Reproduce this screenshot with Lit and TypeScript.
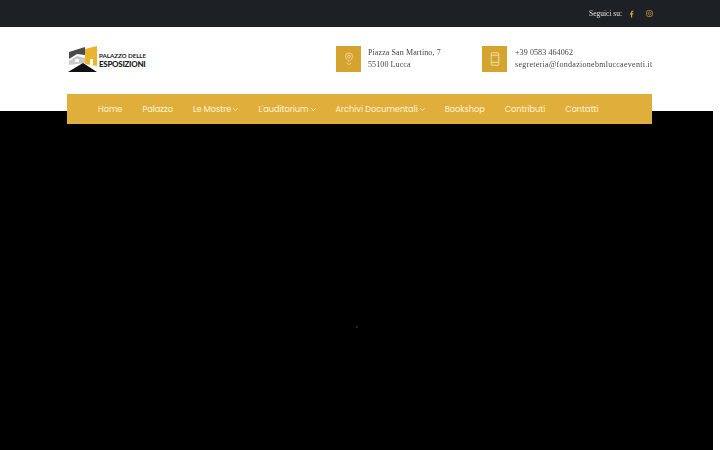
import { LitElement, html, css } from "lit";
import { customElement } from "lit/decorators.js";

const chevron = html`<svg class="chev" viewBox="0.500 1 7 6" width="5" height="5"><path d="M1 2.500 L4 5.500 L7 2.500" fill="none" stroke="currentColor" stroke-width="1.300"/></svg>`;

@customElement("app-root")
export class AppRoot extends LitElement {
  static styles = css`
    :host { display: block; width: 720px; height: 450px; overflow: hidden; background: #fff; }
    .top { height: 27px; background: #1d2125; display: flex; align-items: center; justify-content: flex-end; padding-right: 65px; box-sizing: border-box; }
    .top .label { font: 7.500px "Liberation Serif", serif; color: #e2e2e2; margin-right: 3px; will-change: transform; }
    .social { width: 12px; height: 12px; display: flex; align-items: center; justify-content: center; }
    .social + .social { margin-left: 6px; }
    .head { height: 67px; padding: 0 68px 3px; display: flex; align-items: center; box-sizing: border-box; }
    .logo { display: flex; align-items: center; gap: 2px; width: 268px; flex: none; }
    .brand { font-family: "Lato", sans-serif; color: #1c1c1c; line-height: 1; margin-top: 3px; white-space: nowrap; }
    .brand .a { font-size: 6.300px; font-weight: 700; letter-spacing: -0.1px; display: block; }
    .brand .b { font-size: 8px; font-weight: 900; letter-spacing: -0.3px; display: block; margin-top: 1px; }
    .info { display: flex; align-items: center; gap: 7px; flex: none; }
    .info.one { width: 146px; }
    .info.two { gap: 8px; }
    .box { width: 25px; height: 26px; background: #d5a42f; display: flex; align-items: center; justify-content: center; flex: none; }
    .lines { font: 8px/12px "Liberation Serif", serif; color: #444; letter-spacing: 0.1px; white-space: nowrap; will-change: transform; }
    .lines div { height: 12px; }
    .lines .wide { letter-spacing: 0.28px; }
    nav { position: relative; z-index: 1; margin-left: 67px; width: 585px; height: 30px; background: #e0ae3a; display: flex; align-items: center; padding-left: 31px; box-sizing: border-box; gap: 20px; font: 8.200px "Poppins", "Inter", sans-serif; color: #fff4dc; white-space: nowrap; }
    nav span { display: inline-flex; align-items: center; gap: 2px; }
    .chev { margin-top: 1px; }
    .hero { margin-top: -13px; height: 432px; width: 713px; background: #000; display: flex; align-items: center; justify-content: center; }
    .dot { width: 2px; height: 2px; border-radius: 50%; background: #333; }
  `;

  render() {
    return html`
      <div class="top">
        <span class="label">Seguici su:</span>
        <span class="social">
          <svg viewBox="0 0 8 12" width="5" height="8"><path d="M5 11.500V6.600h1.700L7 4.700H5V3.500c0-.6.200-1 1-1h1.100V.8C6.800.7 6.300.7 5.700.7 4.200.7 3.200 1.600 3.200 3.200v1.500H1.500v1.900h1.700v4.900z" fill="#d9a933"/></svg>
        </span>
        <span class="social">
          <svg viewBox="0 0 12 12" width="7" height="7" fill="none" stroke="#c9a035" stroke-width="1.300"><rect x="1" y="1" width="10" height="10" rx="3"/><circle cx="6" cy="6" r="2.300"/></svg>
        </span>
      </div>
      <div class="head">
        <div class="logo">
          <svg viewBox="0 0 29 26" width="29" height="26">
            <polygon points="17,3 29,0 29,20 17,18" fill="#e9b52c"/>
            <polygon points="1,6 17,1 17,9 9,8 1,13" fill="#4a4a4a"/>
            <polygon points="1,15 9,10 17,12 17,17 1,19" fill="#c9c9c9"/>
            <rect x="7" y="13" width="4" height="3" fill="#fff"/>
            <rect x="22" y="13" width="3" height="6" fill="#fff"/>
            <polygon points="0,26 15,17 29,26" fill="#111"/>
          </svg>
          <div class="brand"><span class="a">PALAZZO DELLE</span><span class="b">ESPOSIZIONI</span></div>
        </div>
        <div class="info one">
          <div class="box">
            <svg viewBox="0 0 14 18" width="10" height="14" fill="none" stroke="#f7e7bd" stroke-width="1"><path d="M7 12.500C4.500 10 2 8 2 5.500a5 5 0 0 1 10 0c0 2.500-2.500 4.500-5 7z"/><circle cx="7" cy="5.500" r="2"/><path d="M4 14.500 7 17l3-2.500"/></svg>
          </div>
          <div class="lines"><div>Piazza San Martino, 7</div><div>55100 Lucca</div></div>
        </div>
        <div class="info two">
          <div class="box">
            <svg viewBox="0 0 12 16" width="10" height="14" fill="none" stroke="#f7e7bd" stroke-width="1"><rect x="1.500" y="0.500" width="9" height="15" rx="1"/><path d="M1.500 3.500h9M1.500 12h9"/></svg>
          </div>
          <div class="lines"><div>+39 0583 464062</div><div class="wide">segreteria@fondazionebmluccaeventi.it</div></div>
        </div>
      </div>
      <nav>
        <span>Home</span><span>Palazzo</span><span>Le Mostre ${chevron}</span><span>L'auditorium ${chevron}</span><span>Archivi Documentali ${chevron}</span><span>Bookshop</span><span>Contributi</span><span>Contatti</span>
      </nav>
      <div class="hero"><div class="dot"></div></div>
    `;
  }
}
